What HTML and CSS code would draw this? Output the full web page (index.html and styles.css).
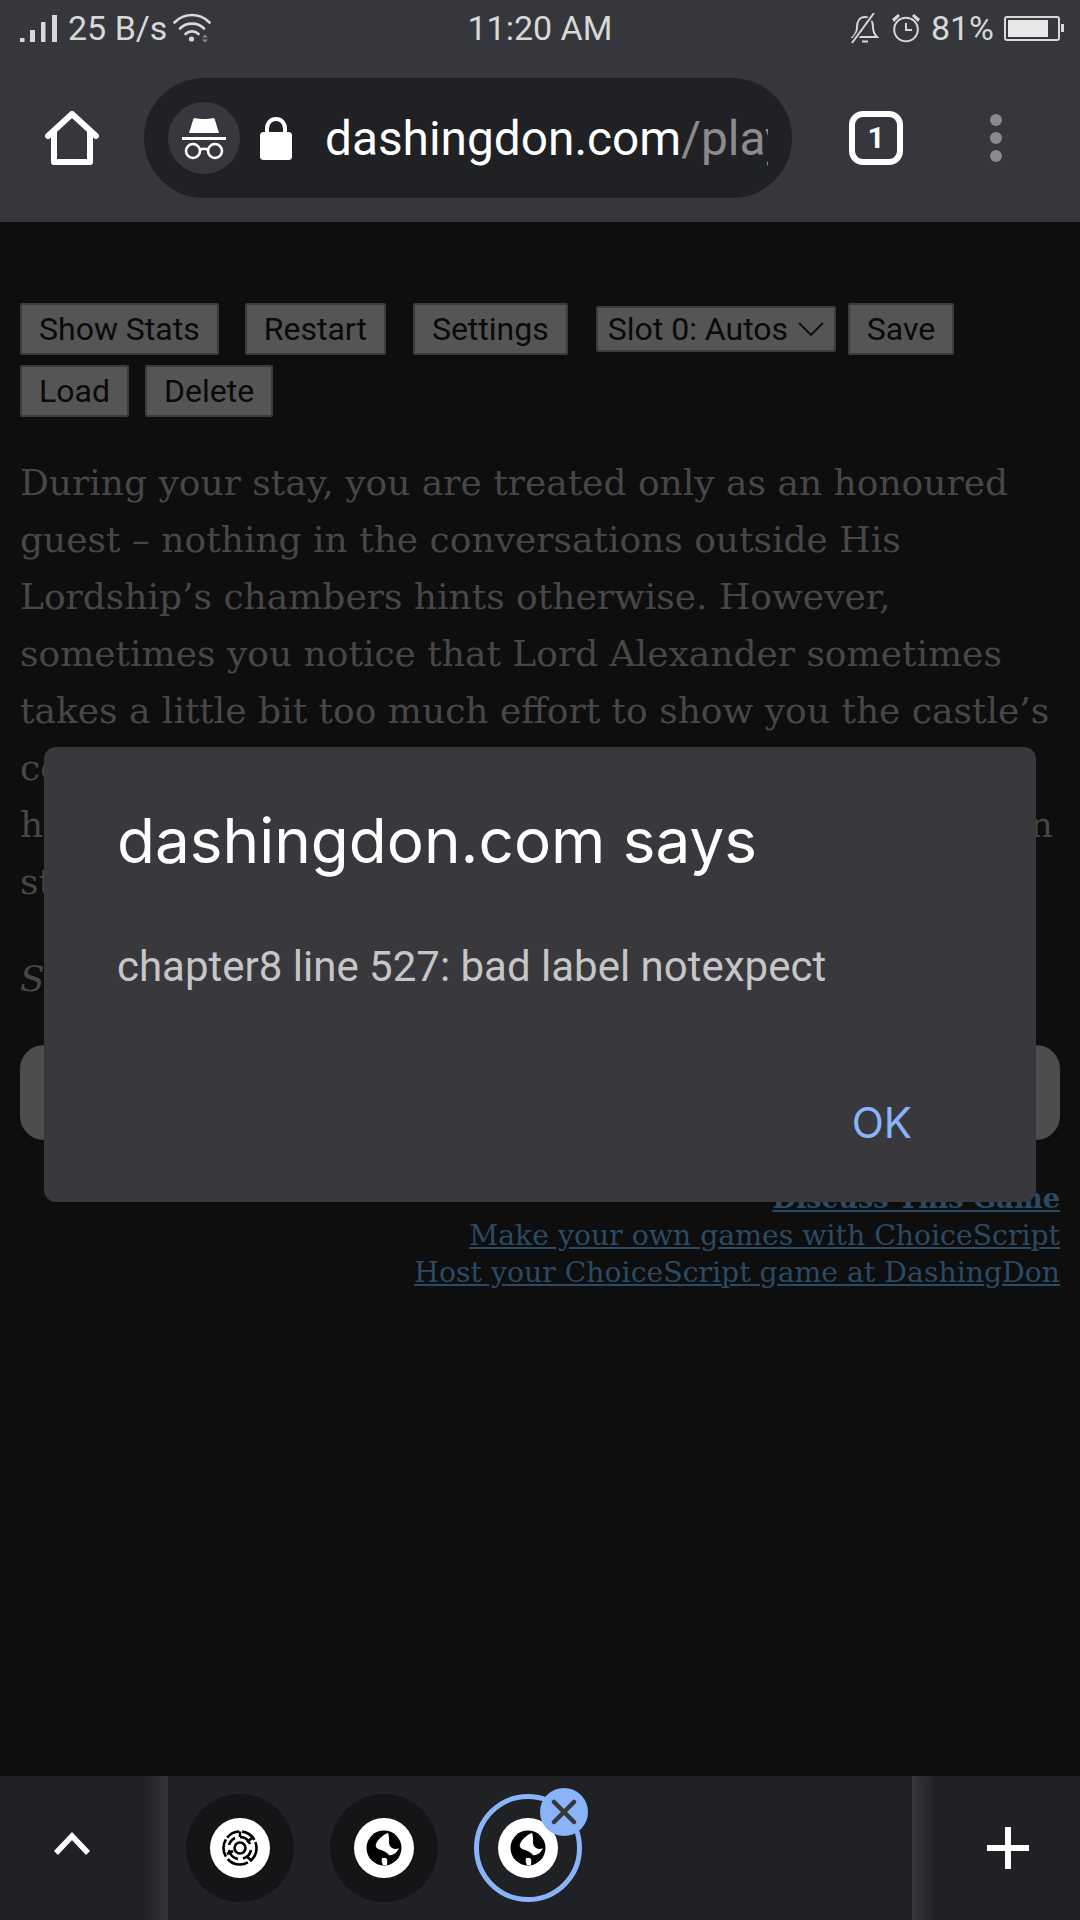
FILE: index.html
```html
<!doctype html>
<html lang="en">
  <head>
    <meta charset="utf-8" />
    <title>dashingdon.com</title>
    <link rel="stylesheet" href="styles.css">
  </head>
  <body>
    <div id="phone">
      <!-- Status + toolbar -->
      <div id="chrome">
        <div class="statusBar">
          <div class="statusLeft">
            <svg class="sigIcon" width="37" height="27" viewBox="0 0 37 27"><path fill="#d8d8d8" d="M0 23h4.500v4H0zM10 15h5v12h-5zM21 7h4.500v20H21zM32 0h5v27h-5z"/></svg>
            <span class="speed">25 B/s</span>
            <svg class="wifiIcon" width="38" height="30" viewBox="0 0 38 30" fill="none" stroke="#d8d8d8" stroke-width="2.600" stroke-linecap="round"><path d="M1.500 9.500C11 -0.500 27 -0.500 36.500 9.500"/><path d="M7 15.500C13.500 9 24.500 9 31 15.500"/><path d="M12.500 21C16 17.500 22 17.500 25.500 21"/><circle cx="18.500" cy="26" r="2.600" fill="#d8d8d8" stroke="none"/><path fill="#8b8b8b" stroke="none" d="M29 24.500l3-3 3 3zM29 26.500l3 3 3-3z"/></svg>
          </div>
          <div class="clock">11:20 AM</div>
          <div class="statusRight">
            <svg width="30" height="31" viewBox="0 0 30 31" fill="none" stroke="#d8d8d8" stroke-width="2"><path d="M3 24c3-3 4-5 4-10 0-6 3-10 8-10s8 4 8 10c0 5 1 7 4 10z"/><path d="M2 30L24 0" stroke="#36373c" stroke-width="5"/><path d="M2 30L24 0"/><path d="M12 28.500h6"/></svg>
            <svg class="alarmIcon" width="30" height="30" viewBox="0 0 30 30" fill="none" stroke="#d8d8d8" stroke-width="2"><circle cx="15" cy="16.500" r="11.800"/><path d="M15 10v7h6"/><path fill="#d8d8d8" stroke="none" d="M1 6l6-5 2 2-6 6zM29 6l-6-5-2 2 6 6z"/></svg>
            <span class="battPct">81%</span>
            <div class="battery"><div class="battFill"></div></div>
            <div class="battNub"></div>
          </div>
        </div>
        <div class="toolbar">
          <svg class="homeIcon" width="54" height="54" viewBox="0 0 54 54" fill="none" stroke="#fff" stroke-width="6" stroke-linejoin="round" stroke-linecap="round"><path d="M3 25L27 3l24 22"/><path d="M9 21v30h36V21"/></svg>
          <div class="omnibox">
            <div class="incog">
              <svg width="52" height="48" viewBox="0 0 52 48"><path fill="#fff" d="M11 19L15.500 4.500C19 3.500 21 5 26 5s7-1.500 10.500-.5L41 19z"/><path fill="#fff" d="M4 23h44v3H4z"/><g fill="none" stroke="#fff" stroke-width="2.600"><circle cx="15" cy="37" r="7"/><circle cx="37" cy="37" r="7"/><path d="M22 36c2.500-1.500 5.500-1.500 8 0"/></g></svg>
            </div>
            <svg class="lockIcon" width="32" height="43" viewBox="0 0 32 43"><path fill="none" stroke="#fff" stroke-width="4" d="M7 16V11.500C7 6 11 2 16 2s9 4 9 9.500V16"/><rect y="15" width="32" height="28" rx="3.500" fill="#fff"/></svg>
            <div class="urlClip"><span class="urlHost">dashingdon.com</span><span class="urlPath">/play/</span></div>
          </div>
          <div class="tabCount">1</div>
          <div class="menuDots"><i></i><i></i><i></i></div>
        </div>
      </div>

      <!-- Game page, dimmed behind the alert -->
      <div id="page">
        <div class="gameBtns">
          <button class="btn btnStats">Show Stats</button>
          <button class="btn btnRestart">Restart</button>
          <button class="btn btnSettings">Settings</button>
          <div class="slotSelect">
            <span>Slot 0: Autos</span>
            <svg width="26" height="14" viewBox="0 0 26 14" fill="none" stroke="#0e0e0e" stroke-width="1.800"><path d="M1 1l12 12L25 1"/></svg>
          </div>
          <button class="btn">Save</button>
          <button class="btn btnLoad">Load</button>
          <button class="btn">Delete</button>
        </div>
        <div class="story">
          <div>During your stay, you are treated only as an honoured</div>
          <div>guest – nothing in the conversations outside His</div>
          <div>Lordship’s chambers hints otherwise. However,</div>
          <div>sometimes you notice that Lord Alexander sometimes</div>
          <div>takes a little bit too much effort to show you the castle’s</div>
          <div>co</div>
          <div class="splitLine"><span>h</span><span>n</span></div>
          <div>st</div>
        </div>
        <div class="storyAside">Sh</div>
        <div class="nextBtn"></div>
        <div class="pageLinks">
          <a class="discuss" href="#">Discuss This Game</a>
          <a href="#">Make your own games with ChoiceScript</a>
          <a href="#">Host your ChoiceScript game at DashingDon</a>
        </div>
      </div>

      <!-- Tab strip -->
      <div id="tabStrip">
        <div class="stripUp">
          <svg width="36" height="24" viewBox="0 0 36 24" fill="none" stroke="#fff" stroke-width="5.500"><path d="M2 22L18 5l16 17"/></svg>
        </div>
        <div class="stripTabs">
          <div class="tabDot">
            <div class="favicon">
              <svg width="36" height="36" viewBox="0 0 36 36" fill="none" stroke="#000" stroke-width="2.600"><circle cx="18" cy="18" r="16.500" stroke-dasharray="15 2.500 22 3 18 2 14 3"/><path d="M18 7a11 11 0 0 1 10 7M29 20a11 11 0 0 1-8 8.500M16 29A11 11 0 0 1 7 20M7 15a11 11 0 0 1 6-7"/><circle cx="18" cy="18" r="5.500"/><path d="M18 1.500v5.500M30 8l-5 4M5 24l6-3M24 26l6 5"/></svg>
            </div>
          </div>
          <div class="tabDot">
            <div class="favicon">
              <svg width="36" height="36" viewBox="0 0 36 36"><circle cx="18" cy="18" r="17.500"/><path fill="#fff" d="M22 3C17 5 12 9 10 14c-1 3 1 5 5 6 4 1 6 3 8 5 3 1 8-2 10-7-3 2-7 1-9-2-2-3 0-8-2-13zM16 28c-1 2 0 5 1 7h4c0-3 1-5-1-7z"/></svg>
            </div>
          </div>
          <div class="tabDot tabActive">
            <div class="favicon">
              <svg width="36" height="36" viewBox="0 0 36 36"><circle cx="18" cy="18" r="17.500"/><path fill="#fff" d="M22 3C17 5 12 9 10 14c-1 3 1 5 5 6 4 1 6 3 8 5 3 1 8-2 10-7-3 2-7 1-9-2-2-3 0-8-2-13zM16 28c-1 2 0 5 1 7h4c0-3 1-5-1-7z"/></svg>
            </div>
            <div class="tabClose">
              <svg width="26" height="26" viewBox="0 0 26 26" stroke="#36373c" stroke-width="4.500" stroke-linecap="round"><path d="M3 3l20 20M23 3L3 23"/></svg>
            </div>
          </div>
        </div>
        <div class="stripNew">
          <svg width="42" height="42" viewBox="0 0 42 42"><path fill="#fff" d="M18 0h6v18h18v6H24v18h-6V24H0v-6h18z"/></svg>
        </div>
      </div>

      <!-- Alert dialog -->
      <div id="alertBox">
        <div class="alertTitle">dashingdon.com says</div>
        <div class="alertMsg">chapter8 line 527: bad label notexpect</div>
        <div class="alertBtns"><span class="alertOk">OK</span></div>
      </div>
    </div>
  </body>
</html>
```

FILE: styles.css
```css
* {
  box-sizing: border-box;
}
body {
  margin: 0;
  background: #0e0e0e;
  font-family: Roboto, sans-serif;
}
#phone {
  position: relative;
  width: 1080px;
  height: 1920px;
  overflow: hidden;
  display: flex;
  flex-direction: column;
}

/* Status bar + toolbar */
#chrome {
  height: 222px;
  background: #36373c;
  flex: none;
}
.statusBar {
  height: 54px;
  padding: 2px 16px 0 20px;
  display: flex;
  align-items: center;
  justify-content: space-between;
  color: #d8d8d8;
  font-size: 34px;
}
.statusLeft,
.statusRight {
  width: 320px;
  display: flex;
  align-items: center;
}
.statusRight {
  justify-content: flex-end;
}
.clock {
  margin-right: 4px;
}
.speed {
  margin-left: 11px;
}
.wifiIcon {
  margin-left: 6px;
}
.alarmIcon {
  margin-left: 11px;
}
.battPct {
  margin-left: 10px;
}
.battery {
  width: 56px;
  height: 25px;
  margin-left: 10px;
  border: 2px solid #d8d8d8;
  border-radius: 3px;
  padding: 2px;
}
.battFill {
  width: 40px;
  height: 100%;
  background: #e8e8e8;
}
.battNub {
  width: 3px;
  height: 8px;
  margin-left: 1px;
  background: #d8d8d8;
}
.toolbar {
  height: 168px;
  padding: 0 0 0 45px;
  display: flex;
  align-items: center;
}
.omnibox {
  width: 648px;
  height: 120px;
  margin-left: 45px;
  padding-left: 24px;
  border-radius: 60px;
  background: #202124;
  display: flex;
  align-items: center;
}
.incog {
  width: 72px;
  height: 72px;
  border-radius: 50%;
  background: #37383d;
  display: flex;
  align-items: center;
  justify-content: center;
}
.lockIcon {
  margin-left: 20px;
}
.urlClip {
  width: 443px;
  margin-left: 33px;
  padding-top: 2px;
  overflow: hidden;
  white-space: nowrap;
  font-size: 47.800px;
  line-height: 60px;
}
.urlHost {
  color: #fff;
}
.urlPath {
  color: #8c8c8c;
}
.tabCount {
  width: 54px;
  height: 54px;
  margin-left: 57px;
  border: 6px solid #fff;
  border-radius: 14px;
  color: #fff;
  font-size: 30px;
  font-weight: 700;
  text-align: center;
  line-height: 41px;
}
.menuDots {
  margin-left: 87px;
  display: flex;
  flex-direction: column;
  gap: 6px;
}
.menuDots i {
  width: 12px;
  height: 12px;
  border-radius: 50%;
  background: #8a8a8a;
}

/* Dimmed page */
#page {
  flex: 1;
  padding: 81px 20px 0;
  color: #474747;
}
.gameBtns {
  display: flex;
  flex-wrap: wrap;
  align-items: center;
  row-gap: 10px;
  column-gap: 18px;
  height: 113px;
  align-content: flex-start;
}
.btn {
  height: 52px;
  padding: 0 17px;
  border: 2px solid #3c3c3c;
  border-radius: 2px;
  background: #555;
  color: #0a0a0a;
  font-family: Roboto, sans-serif;
  font-size: 32px;
}
.btnStats {
  margin-right: 8px;
}
.btnRestart {
  margin-right: 9px;
}
.btnSettings {
  margin-right: 10px;
}
.slotSelect {
  width: 240px;
  height: 46px;
  margin-right: -6px;
  padding: 0 10px;
  border: 2px solid #3c3c3c;
  border-radius: 2px;
  background: #555;
  color: #0a0a0a;
  font-size: 32px;
  display: flex;
  align-items: center;
  justify-content: space-between;
}
.btnLoad {
  margin-right: -2px;
}
.story {
  margin-top: 38px;
  font-family: "DejaVu Serif", serif;
  font-size: 36px;
  line-height: 57px;
  white-space: nowrap;
}
.splitLine {
  display: flex;
  justify-content: space-between;
  padding-right: 7px;
}
.storyAside {
  margin-top: 40px;
  font-family: "DejaVu Serif", serif;
  font-size: 36px;
  font-style: italic;
  line-height: 57px;
}
.nextBtn {
  height: 95px;
  margin-top: 38px;
  border-radius: 24px;
  background: #4d4d4d;
}
.pageLinks {
  margin-top: 40px;
  display: flex;
  flex-direction: column;
  align-items: flex-end;
  font-family: "DejaVu Serif", serif;
  font-size: 28.300px;
  line-height: 37px;
}
.pageLinks a {
  color: #2b4a63;
}
.pageLinks .discuss {
  font-size: 27.200px;
  font-weight: 700;
}

/* Bottom tab strip */
#tabStrip {
  height: 144px;
  flex: none;
  background: #202125;
  display: flex;
}
.stripUp {
  width: 168px;
  padding: 0 24px 10px 0;
  background: linear-gradient(to right, #202125 145px, #34353a 168px);
  display: flex;
  align-items: center;
  justify-content: center;
}
.stripTabs {
  width: 744px;
  padding: 0 0 0 18px;
  display: flex;
  align-items: center;
  gap: 36px;
}
.tabDot {
  position: relative;
  width: 108px;
  height: 108px;
  border-radius: 50%;
  background: #151517;
  display: flex;
  align-items: center;
  justify-content: center;
}
.tabActive {
  background: transparent;
  border: 5px solid #8ab4f8;
}
.favicon {
  width: 60px;
  height: 60px;
  border-radius: 50%;
  background: #fff;
  display: flex;
  align-items: center;
  justify-content: center;
}
.tabClose {
  position: absolute;
  top: -11px;
  right: -11px;
  width: 48px;
  height: 48px;
  border-radius: 50%;
  background: #8ab4f8;
  display: flex;
  align-items: center;
  justify-content: center;
}
.stripNew {
  flex: 1;
  padding-left: 23px;
  background: linear-gradient(to right, #36373c, #202125 24px);
  display: flex;
  align-items: center;
  justify-content: center;
}

/* Alert sits over the page */
#alertBox {
  position: absolute;
  left: 44px;
  top: 747px;
  width: 992px;
  height: 455px;
  border-radius: 12px;
  background: #38383d;
  padding: 0 73px;
}
.alertTitle {
  margin-top: 54px;
  color: #fff;
  font-family: Inter, sans-serif;
  font-size: 62px;
  line-height: 80px;
}
.alertMsg {
  margin-top: 60px;
  color: #c6c6c6;
  font-size: 42px;
  line-height: 52px;
}
.alertBtns {
  margin-top: 104px;
  display: flex;
  justify-content: flex-end;
  padding-right: 51px;
}
.alertOk {
  color: #8ab4f8;
  font-family: Inter, sans-serif;
  font-size: 42px;
  line-height: 52px;
}
```
